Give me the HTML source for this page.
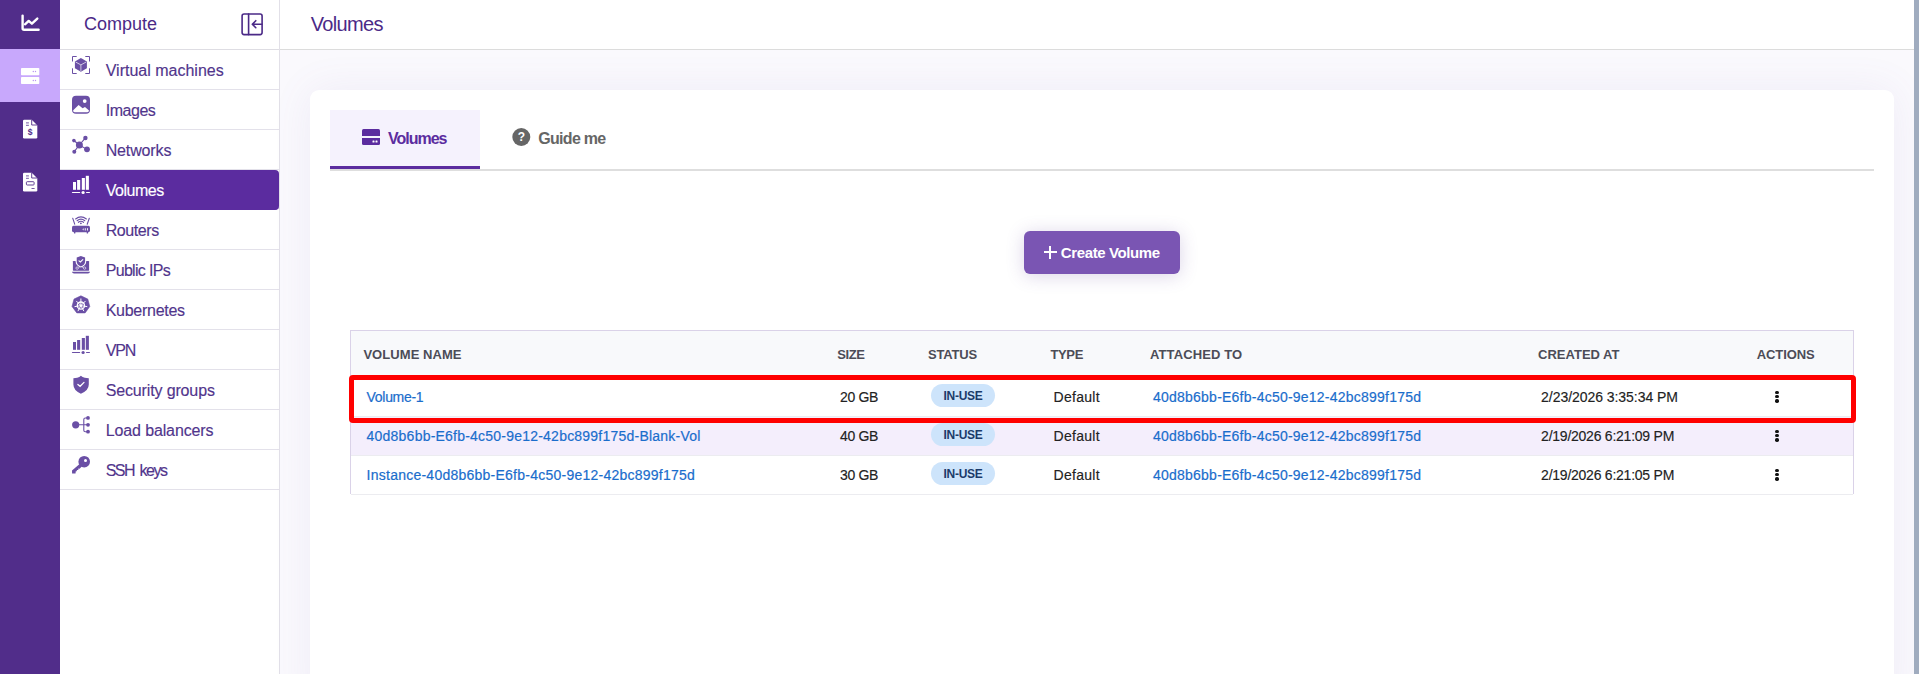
<!DOCTYPE html>
<html><head><meta charset="utf-8">
<style>
*{box-sizing:border-box;margin:0;padding:0}
html,body{width:1919px;height:674px;overflow:hidden;background:#fff;font-family:"Liberation Sans",sans-serif}
.abs{position:absolute}
#rail{left:0;top:0;width:60px;height:674px;background:#512d8a}
#rail .act{left:0;top:49px;width:60px;height:53px;background:#c8a8fc}
#side{left:60px;top:0;width:220px;height:674px;background:#fff;border-right:1px solid #e2e0e8}
#side .hdr{left:0;top:0;width:219px;height:50px;border-bottom:1px solid #dedde3}
#side .hdr .t{left:24px;top:14px;font-size:18px;color:#4b2a87;white-space:nowrap;line-height:20px}
.item{position:absolute;left:0;width:219px;height:40px;border-bottom:1px solid #e3e1ea}
.item .t{position:absolute;left:45.7px;top:12px;font-size:16px;line-height:18px;color:#51358c;white-space:nowrap;-webkit-text-stroke:0.15px currentColor}
.item .ic{position:absolute;left:6px;top:0}
.item.on{background:#5b2c9f;border-radius:0 4px 4px 0;border-bottom-color:#5b2c9f}
.item.on .t{color:#fff}
#main{left:280px;top:0;width:1634px;height:674px;background:#faf9fd}
#topbar{left:280px;top:0;width:1634px;height:50px;background:#fff;border-bottom:1px solid #dcdcdc}
#topbar .t{left:30.7px;top:13px;font-size:20px;line-height:22px;color:#4b2a87;letter-spacing:-0.67px}
#scroll{left:1914px;top:0;width:5px;height:674px;background:#a0acbf}
#card{left:310px;top:90px;width:1584px;height:620px;background:#fff;border-radius:9px;box-shadow:0 0 40px rgba(120,100,180,0.09)}
#tabline{left:330px;top:169px;width:1544px;height:2px;background:#dedede}
#tab1{left:330px;top:110px;width:150px;height:59px;background:#f5f2fd;border-bottom:3px solid #5b2c9f}
.tabt{top:130px;font-size:16px;line-height:18px;font-weight:bold;white-space:nowrap}
#btn{left:1024px;top:231px;width:156px;height:43px;background:#7a55b3;border-radius:6px;box-shadow:0 2px 18px rgba(90,60,150,0.22);color:#fff}
#btn .plus{position:absolute;left:20px;top:15px;width:12.6px;height:12.6px}
#btn .plus:before{content:"";position:absolute;left:5.3px;top:0;width:2px;height:12.6px;background:#fff}
#btn .plus:after{content:"";position:absolute;left:0;top:5.3px;width:12.6px;height:2px;background:#fff}
#btn .bt{position:absolute;left:36.8px;top:13px;font-size:15px;line-height:17px;font-weight:bold;letter-spacing:-0.38px;white-space:nowrap}
#table{left:350px;top:330px;width:1504px;height:164px;border:1px solid #dad2e8;border-bottom:none;background:#fff}
.th{position:absolute;top:0;left:0;width:1502px;height:47px;background:#f8f9fb}
.tr{position:absolute;left:0;width:1502px;height:39px;border-bottom:1px solid #ececf0}
.cell{position:absolute;white-space:nowrap}
.hd{font-size:13px;line-height:15px;font-weight:bold;color:#4c4c57;top:16px}
.lnk{color:#1a6dcc;font-size:14px;line-height:16px;top:10.5px;-webkit-text-stroke:0.2px #1a6dcc}
.txt{color:#222;font-size:14px;line-height:16px;top:10.5px;-webkit-text-stroke:0.15px #222}
.badge{background:#cde4fb;color:#1b3b6a;font-size:12px;font-weight:bold;border-radius:11.5px;width:64px;height:23px;text-align:center;line-height:24px;top:6px;letter-spacing:-0.3px}
.dots{top:12.5px;width:5px;height:14px}
.dots i{display:block;width:3.4px;height:3.4px;border-radius:50%;background:#111;margin:0 0 1.1px 1.3px}
#red{left:349px;top:375px;width:1507px;height:48px;border:5px solid #f00;border-radius:4px}

</style></head><body>
<div id="main" class="abs"></div>
<div id="topbar" class="abs"><div class="t abs">Volumes</div></div>
<div id="rail" class="abs">
  <div class="act abs"></div>
  <svg class="abs" style="left:15px;top:8px" width="30" height="30" viewBox="0 0 30 30"><g fill="none" stroke="#fff" stroke-width="2.4" stroke-linecap="round" stroke-linejoin="round"><path d="M7.6 7.6V20.3Q7.6 21.8 9.1 21.8H23.6"/><path d="M10 16.3L13.7 12.9L16.9 15.7L22.3 10.6"/></g></svg>
<svg class="abs" style="left:15px;top:61px" width="30" height="30" viewBox="0 0 30 30"><g fill="#fff"><rect x="6" y="6.9" width="18.3" height="7.3" rx="0.8"/><rect x="6" y="16" width="18.3" height="7.1" rx="0.8"/></g><g fill="#b994f0"><circle cx="18.3" cy="10.5" r="0.7"/><circle cx="20.5" cy="10.5" r="0.7"/><circle cx="18.3" cy="19.5" r="0.7"/><circle cx="20.5" cy="19.5" r="0.7"/></g></svg>
<svg class="abs" style="left:15px;top:114px" width="30" height="30" viewBox="0 0 30 30"><path d="M9.3 5.8H16.7L22.3 11.2V23.2Q22.3 24.5 21 24.5H9.3Q8 24.5 8 23.2V7.1Q8 5.8 9.3 5.8Z" fill="#fff"/><path d="M16.7 5.8V11H22.3" fill="none" stroke="#512d8a" stroke-width="0.9"/><g stroke="#512d8a" stroke-width="0.8"><path d="M11 8.9H13.9M11 11.3H13.9"/></g><text x="15.2" y="21.2" font-family="Liberation Sans" font-size="8.5" font-weight="bold" text-anchor="middle" fill="#512d8a">$</text></svg>
<svg class="abs" style="left:15px;top:167px" width="30" height="30" viewBox="0 0 30 30"><path d="M9.3 5.8H16.7L22.3 11.2V23.2Q22.3 24.5 21 24.5H9.3Q8 24.5 8 23.2V7.1Q8 5.8 9.3 5.8Z" fill="#fff"/><path d="M16.7 5.8V11H22.3" fill="none" stroke="#512d8a" stroke-width="0.9"/><g stroke="#512d8a" stroke-width="0.8"><path d="M11 8.9H13.9M11 11.3H13.9M16.5 21.5H19.6"/></g><rect x="11.4" y="14.7" width="7.7" height="3.3" rx="0.8" fill="none" stroke="#512d8a" stroke-width="0.9"/></svg>
</div>
<div id="side" class="abs">
  <div class="hdr abs"><div class="t abs">Compute</div><svg class="abs" style="left:180px;top:12px" width="24" height="24" viewBox="0 0 24 24"><g fill="none" stroke="#4b2a87" stroke-width="1.6" stroke-linecap="round" stroke-linejoin="round"><rect x="2.1" y="2" width="20" height="20.6" rx="2"/><path d="M8.6 2V22.6M21.8 12.2H13M15.8 8.7L12.3 12.2L15.8 15.7"/></g></svg></div>
  <div class="item" style="top:50px"><svg class="ic" width="30" height="30" viewBox="0 0 30 30"><g fill="none" stroke="#6a4fa5" stroke-width="1">
<path d="M6.5 11.5V6.5H10.7M19.3 6.5H23.5V11.5M23.5 18.3V23.5H19.3M10.7 23.5H6.5V18.3"/></g>
<path d="M14.9 8L20.9 11.5V18.3L14.9 21.8L8.9 18.3V11.5Z" fill="#6a4fa5"/>
<path d="M9.6 12L14.9 14.9L20.2 12M14.9 14.9V21" fill="none" stroke="#fff" stroke-width="0.9" opacity="0.75"/></svg><div class="t" style="letter-spacing:0px">Virtual machines</div></div>
  <div class="item" style="top:90px"><svg class="ic" width="30" height="30" viewBox="0 0 30 30"><rect x="6" y="5.8" width="18" height="18" rx="4" fill="#6a4fa5"/>
<circle cx="18.7" cy="11.1" r="1.9" fill="#fff"/>
<path d="M7.2 20.2L12.6 15L16.6 18.3L19 16.9L23 20.6L22.8 21.2Q22.5 22.3 21 22.3H9Q7.3 22.3 7.2 20.9Z" fill="#fff"/></svg><div class="t" style="letter-spacing:-0.46px">Images</div></div>
  <div class="item" style="top:130px"><svg class="ic" width="30" height="30" viewBox="0 0 30 30"><g stroke="#6a4fa5" stroke-width="1.1"><path d="M13.4 15L19.2 8.1M13.4 15L20.9 19.4M13.4 15L7.9 10.5M13.4 15L8.2 21.7"/></g>
<g fill="#6a4fa5"><circle cx="13.4" cy="15.1" r="3.5"/><circle cx="19.4" cy="8" r="2.2"/><circle cx="21" cy="19.3" r="2.9"/><circle cx="7.9" cy="10.6" r="1.8"/><circle cx="8.3" cy="21.8" r="2"/></g></svg><div class="t" style="letter-spacing:-0.14px">Networks</div></div>
  <div class="item on" style="top:170px"><svg class="ic" width="30" height="30" viewBox="0 0 30 30"><g fill="#fff"><rect x="7" y="12" width="3" height="7.8"/><rect x="11.1" y="10" width="3.1" height="9.8"/><rect x="15.8" y="8" width="3.1" height="11.8"/><rect x="19.8" y="5.8" width="3.1" height="14"/>
<rect x="5.9" y="21.9" width="8.3" height="1.2" rx="0.6"/><rect x="20" y="21.9" width="4" height="1.2" rx="0.6"/><circle cx="17.1" cy="22.5" r="1.6"/></g></svg><div class="t" style="letter-spacing:-0.47px">Volumes</div></div>
  <div class="item" style="top:210px"><svg class="ic" width="30" height="30" viewBox="0 0 30 30"><g fill="none" stroke="#6a4fa5" stroke-width="1.1" stroke-linecap="round">
<path d="M6.7 8.2L8.7 14.2M23.3 8.2L21.2 14.2"/>
<path d="M9.6 9Q14.9 4.8 20.4 9"/><path d="M11.1 10.7Q14.9 7.6 18.8 10.7"/><path d="M12.4 12.3Q14.9 10.3 17.5 12.3"/></g>
<circle cx="14.9" cy="13.3" r="0.9" fill="#6a4fa5"/>
<rect x="6" y="15.8" width="18" height="6.4" rx="1.6" fill="#6a4fa5"/>
<rect x="8" y="21" width="1.4" height="2.6" rx="0.6" fill="#6a4fa5"/><rect x="20.7" y="21" width="1.4" height="2.6" rx="0.6" fill="#6a4fa5"/>
<g fill="#fff"><path d="M16.4 19.3L17.6 18.2V20.5Z"/><rect x="18.8" y="18.2" width="0.9" height="2.3"/><rect x="21" y="18.2" width="0.9" height="2.3"/></g></svg><div class="t" style="letter-spacing:-0.43px">Routers</div></div>
  <div class="item" style="top:250px"><svg class="ic" width="30" height="30" viewBox="0 0 30 30"><rect x="6.9" y="10.9" width="16.2" height="9.8" rx="0.6" fill="#6a4fa5"/>
<path d="M6 21.8H24Q23.8 23.6 22 23.6H8Q6.2 23.6 6 21.8Z" fill="#6a4fa5"/>
<path d="M14.9 5.1L20.2 6.9V11.5Q20.2 15.6 14.9 17.6Q9.6 15.6 9.6 11.5V6.9Z" fill="#fff"/>
<path d="M14.9 5.9L19.1 7.4V11.5Q19.1 14.9 14.9 16.5Q10.7 14.9 10.7 11.5V7.4Z" fill="#6a4fa5"/>
<path d="M13 10.8L14.4 12L16.8 9.6" fill="none" stroke="#fff" stroke-width="1.1" stroke-linecap="round"/>
<g fill="none" stroke="#fff" stroke-width="0.8" opacity="0.8"><circle cx="11.1" cy="18.1" r="1.2"/><circle cx="18.6" cy="18.1" r="1.2"/><path d="M12.3 18.1L14 16.5M17.4 18.1L15.8 16.5"/></g></svg><div class="t" style="letter-spacing:-0.68px">Public IPs</div></div>
  <div class="item" style="top:290px"><svg class="ic" width="30" height="30" viewBox="0 0 30 30"><path d="M14.9 5.8L21.8 9.1L23.8 16.5L19.1 22.9H10.8L6 16.5L8 9.1Z" fill="#6a4fa5" stroke="#6a4fa5" stroke-width="0.6" stroke-linejoin="round"/>
<g stroke="#fff" stroke-width="1" stroke-linecap="round"><path d="M14.9 15.6L14.9 8.9M14.9 15.6L10.5 11.2M14.9 15.6L19.3 11.2M14.9 15.6L8.9 16.6M14.9 15.6L20.9 16.6M14.9 15.6L12.1 20.8M14.9 15.6L17.7 20.8"/></g>
<circle cx="14.9" cy="15.6" r="3.6" fill="none" stroke="#fff" stroke-width="1.3"/><circle cx="14.9" cy="15.6" r="1" fill="#fff"/></svg><div class="t" style="letter-spacing:-0.27px">Kubernetes</div></div>
  <div class="item" style="top:330px"><svg class="ic" width="30" height="30" viewBox="0 0 30 30"><g fill="#6a4fa5"><rect x="7" y="12" width="3" height="7.8"/><rect x="11.1" y="10" width="3.1" height="9.8"/><rect x="15.8" y="8" width="3.1" height="11.8"/><rect x="19.8" y="5.8" width="3.1" height="14"/>
<rect x="5.9" y="21.9" width="8.3" height="1.2" rx="0.6"/><rect x="20" y="21.9" width="4" height="1.2" rx="0.6"/><circle cx="17.1" cy="22.5" r="1.6"/></g></svg><div class="t" style="letter-spacing:-1.15px">VPN</div></div>
  <div class="item" style="top:370px"><svg class="ic" width="30" height="30" viewBox="0 0 30 30"><path d="M14.9 5.8Q13.6 7.2 11.2 7.8Q9.4 8.2 7.4 8.3V14.6Q7.4 20.5 14.9 23.8Q22.8 20.5 22.8 14.6V8.3Q20.6 8.2 18.8 7.8Q16.3 7.2 14.9 5.8Z" fill="#6a4fa5"/>
<path d="M11.9 14.4L14.1 16.3L18 12.4" fill="none" stroke="#fff" stroke-width="1.3" stroke-linecap="round"/></svg><div class="t" style="letter-spacing:-0.14px">Security groups</div></div>
  <div class="item" style="top:410px"><svg class="ic" width="30" height="30" viewBox="0 0 30 30"><circle cx="9.7" cy="14.8" r="3.6" fill="#6a4fa5"/>
<path d="M13 14.8H21.5M21.7 8L19.3 8Q17.8 8 17.8 9.5V20.2Q17.8 21.7 19.3 21.7H21.7" fill="none" stroke="#6a4fa5" stroke-width="1.1"/>
<g fill="#6a4fa5"><circle cx="22" cy="7.9" r="1.9"/><circle cx="22" cy="14.8" r="1.9"/><circle cx="22" cy="21.7" r="1.9"/></g></svg><div class="t" style="letter-spacing:-0.12px">Load balancers</div></div>
  <div class="item" style="top:450px"><svg class="ic" width="30" height="30" viewBox="0 0 30 30"><circle cx="18.2" cy="11.7" r="5.8" fill="#6a4fa5"/>
<circle cx="19.5" cy="10.4" r="1.5" fill="#fff"/>
<path d="M14.2 13.5L16.5 15.8L13.6 18.7L12.4 18.6L12.3 19.9L10.9 19.9L10.8 21.2L9.8 21.3L9.5 23.5L6.1 23.6L6 20.5Z" fill="#6a4fa5"/></svg><div class="t" style="letter-spacing:-1.5px;word-spacing:2.5px">SSH keys</div></div>
</div>
<div id="card" class="abs"></div>
<div id="tabline" class="abs"></div>
<div id="tab1" class="abs"></div>
<div class="abs tabt" style="left:388px;color:#5b2c9f;letter-spacing:-1px">Volumes</div>
<svg class="abs" style="left:362px;top:129px" width="18" height="16" viewBox="0 0 18 16"><path d="M1.5 0H16.5Q18 0 18 1.5V7H0V1.5Q0 0 1.5 0Z" fill="#5b2c9f"/><path d="M0 9H18V14.5Q18 16 16.5 16H1.5Q0 16 0 14.5Z" fill="#5b2c9f"/><g fill="#fff"><rect x="10.5" y="11.6" width="2" height="2" rx="0.4"/><rect x="13.5" y="11.6" width="2" height="2" rx="0.4"/></g></svg>
<div class="abs tabt" style="left:538.3px;color:#666;letter-spacing:-0.71px">Guide me</div>
<svg class="abs" style="left:512px;top:128px" width="19" height="19" viewBox="0 0 19 19"><circle cx="9.3" cy="9" r="9" fill="#666"/><text x="9.3" y="13.3" font-family="Liberation Sans" font-size="12" font-weight="bold" text-anchor="middle" fill="#fff">?</text></svg>
<div id="btn" class="abs"><span class="plus"></span><span class="bt">Create Volume</span></div>
<div id="table" class="abs">
  <div class="th"><div class="cell hd" style="left:12.4px;letter-spacing:0.06px">VOLUME NAME</div><div class="cell hd" style="left:486.2px;letter-spacing:-0.4px">SIZE</div><div class="cell hd" style="left:577.0px;letter-spacing:-0.2px">STATUS</div><div class="cell hd" style="left:699.4px;letter-spacing:-0.33px">TYPE</div><div class="cell hd" style="left:799.0px;letter-spacing:0.11px">ATTACHED TO</div><div class="cell hd" style="left:1187.1px;letter-spacing:0px">CREATED AT</div><div class="cell hd" style="left:1405.7px;letter-spacing:-0.07px">ACTIONS</div></div>
  <div class="tr" style="top:47px">
    <div class="cell lnk" style="left:15.6px;letter-spacing:-0.31px">Volume-1</div>
    <div class="cell txt" style="left:489.1px;letter-spacing:-0.37px">20 GB</div>
    <div class="cell badge" style="left:580px">IN-USE</div>
    <div class="cell txt" style="left:702.5px;letter-spacing:0.28px">Default</div>
    <div class="cell lnk" style="left:802px;letter-spacing:0.23px">40d8b6bb-E6fb-4c50-9e12-42bc899f175d</div>
    <div class="cell txt" style="left:1190.1px;letter-spacing:-0.05px">2/23/2026 3:35:34 PM</div>
    <div class="cell dots" style="left:1423px"><i></i><i></i><i></i></div>
  </div>
  <div class="tr" style="top:86px;background:#f4eefc">
    <div class="cell lnk" style="left:15.6px;letter-spacing:0.22px">40d8b6bb-E6fb-4c50-9e12-42bc899f175d-Blank-Vol</div>
    <div class="cell txt" style="left:489.1px;letter-spacing:-0.37px">40 GB</div>
    <div class="cell badge" style="left:580px">IN-USE</div>
    <div class="cell txt" style="left:702.5px;letter-spacing:0.28px">Default</div>
    <div class="cell lnk" style="left:802px;letter-spacing:0.23px">40d8b6bb-E6fb-4c50-9e12-42bc899f175d</div>
    <div class="cell txt" style="left:1190.1px;letter-spacing:-0.24px">2/19/2026 6:21:09 PM</div>
    <div class="cell dots" style="left:1423px"><i></i><i></i><i></i></div>
  </div>
  <div class="tr" style="top:125px">
    <div class="cell lnk" style="left:15.6px;letter-spacing:0.243px">Instance-40d8b6bb-E6fb-4c50-9e12-42bc899f175d</div>
    <div class="cell txt" style="left:489.1px;letter-spacing:-0.37px">30 GB</div>
    <div class="cell badge" style="left:580px">IN-USE</div>
    <div class="cell txt" style="left:702.5px;letter-spacing:0.28px">Default</div>
    <div class="cell lnk" style="left:802px;letter-spacing:0.23px">40d8b6bb-E6fb-4c50-9e12-42bc899f175d</div>
    <div class="cell txt" style="left:1190.1px;letter-spacing:-0.24px">2/19/2026 6:21:05 PM</div>
    <div class="cell dots" style="left:1423px"><i></i><i></i><i></i></div>
  </div>
</div>
<div id="red" class="abs"></div>
<div id="scroll" class="abs"></div>
</body></html>
